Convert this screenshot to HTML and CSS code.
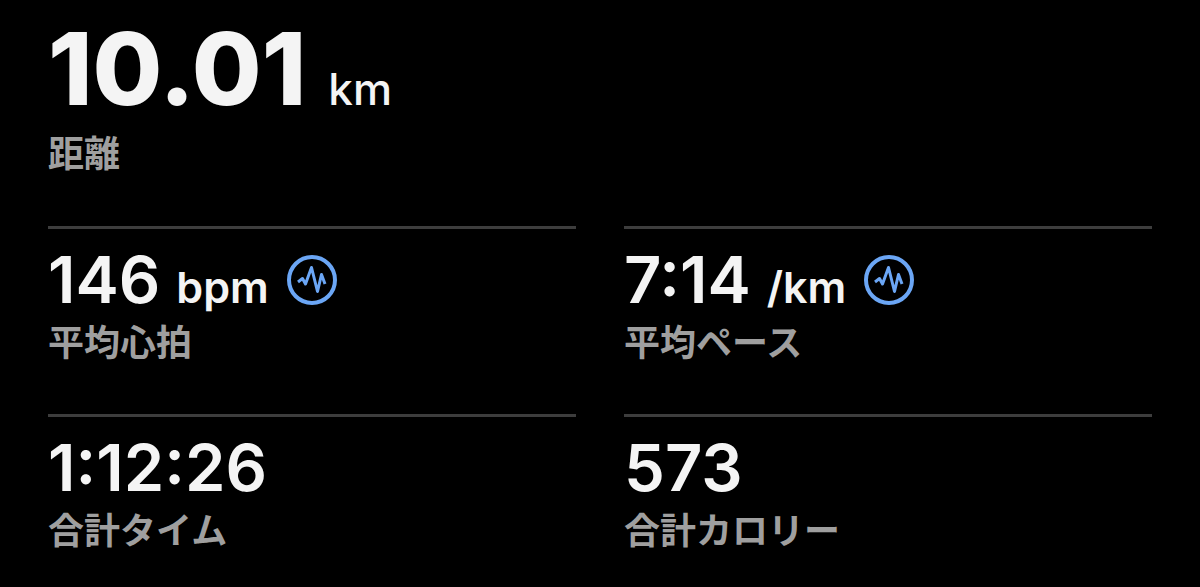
FILE: index.html
```html
<!DOCTYPE html>
<html lang="ja">
<head>
  <meta charset="UTF-8">
  <meta name="viewport" content="width=device-width, initial-scale=1">
  <title>ワークアウト</title>
  <link rel="stylesheet" href="styles.css">
</head>
<body>
  <main class="workout">
    <!-- Distance -->
    <section class="distance">
      <div class="value">10.01<span class="unit">km</span></div>
      <div class="label">距離</div>
    </section>

    <!-- Stats -->
    <section class="stats">
      <div class="stat">
        <div class="value">
          <span>146<span class="unit">bpm</span></span>
          <button class="chart-btn" type="button" aria-label="平均心拍のグラフ">
            <svg viewBox="0 0 50 50">
              <circle cx="25" cy="25" r="23"/>
              <path d="M11 27L15.5 23.5L18.5 29L24.5 12.5L30.5 36.5L34.5 19.5L38 29"/>
            </svg>
          </button>
        </div>
        <div class="label">平均心拍</div>
      </div>
      <div class="stat">
        <div class="value">
          <span>7:14<span class="unit">/km</span></span>
          <button class="chart-btn" type="button" aria-label="平均ペースのグラフ">
            <svg viewBox="0 0 50 50">
              <circle cx="25" cy="25" r="23"/>
              <path d="M11 27L15.5 23.5L18.5 29L24.5 12.5L30.5 36.5L34.5 19.5L38 29"/>
            </svg>
          </button>
        </div>
        <div class="label">平均ペース</div>
      </div>
      <div class="stat">
        <div class="value">1:12:26</div>
        <div class="label">合計タイム</div>
      </div>
      <div class="stat">
        <div class="value">573</div>
        <div class="label">合計カロリー</div>
      </div>
    </section>
  </main>
</body>
</html>
```
FILE: styles.css
```css
* {
  box-sizing: border-box;
}
body {
  margin: 0;
  background: #000;
  color: #f4f4f4;
  font-family: Inter, "Noto Sans CJK JP", sans-serif;
}
.workout {
  padding: 18px 48px;
}
.distance {
  padding-bottom: 52px;
}
.distance .value {
  font-size: 101px;
  font-weight: 800;
  line-height: 100px;
}
.unit {
  margin-left: 22px;
  font-size: 44px;
  font-weight: 500;
  line-height: 44px;
}
.label {
  margin-top: 10px;
  color: #9f9f9f;
  font-size: 36px;
  font-weight: 700;
  line-height: 40px;
}
.distance .label {
  margin-top: 16px;
}
.stats {
  display: grid;
  grid-template-columns: 1fr 1fr;
  gap: 51px 48px;
}
.stat {
  padding-top: 18px;
  border-top: 3px solid #3d3d3d;
}
.stat .value {
  display: flex;
  align-items: center;
  gap: 18px;
  font-size: 65px;
  font-weight: 600;
  line-height: 66px;
}
.stat .unit {
  margin-left: 16px;
  font-size: 43px;
  font-weight: 600;
}
.chart-btn {
  width: 50px;
  height: 50px;
  padding: 0;
  border: 0;
  background: none;
}
.chart-btn svg {
  display: block;
  fill: none;
  stroke: #6ba6f5;
  stroke-width: 4;
}
.chart-btn path {
  stroke-width: 3;
  stroke-linejoin: round;
}
```
